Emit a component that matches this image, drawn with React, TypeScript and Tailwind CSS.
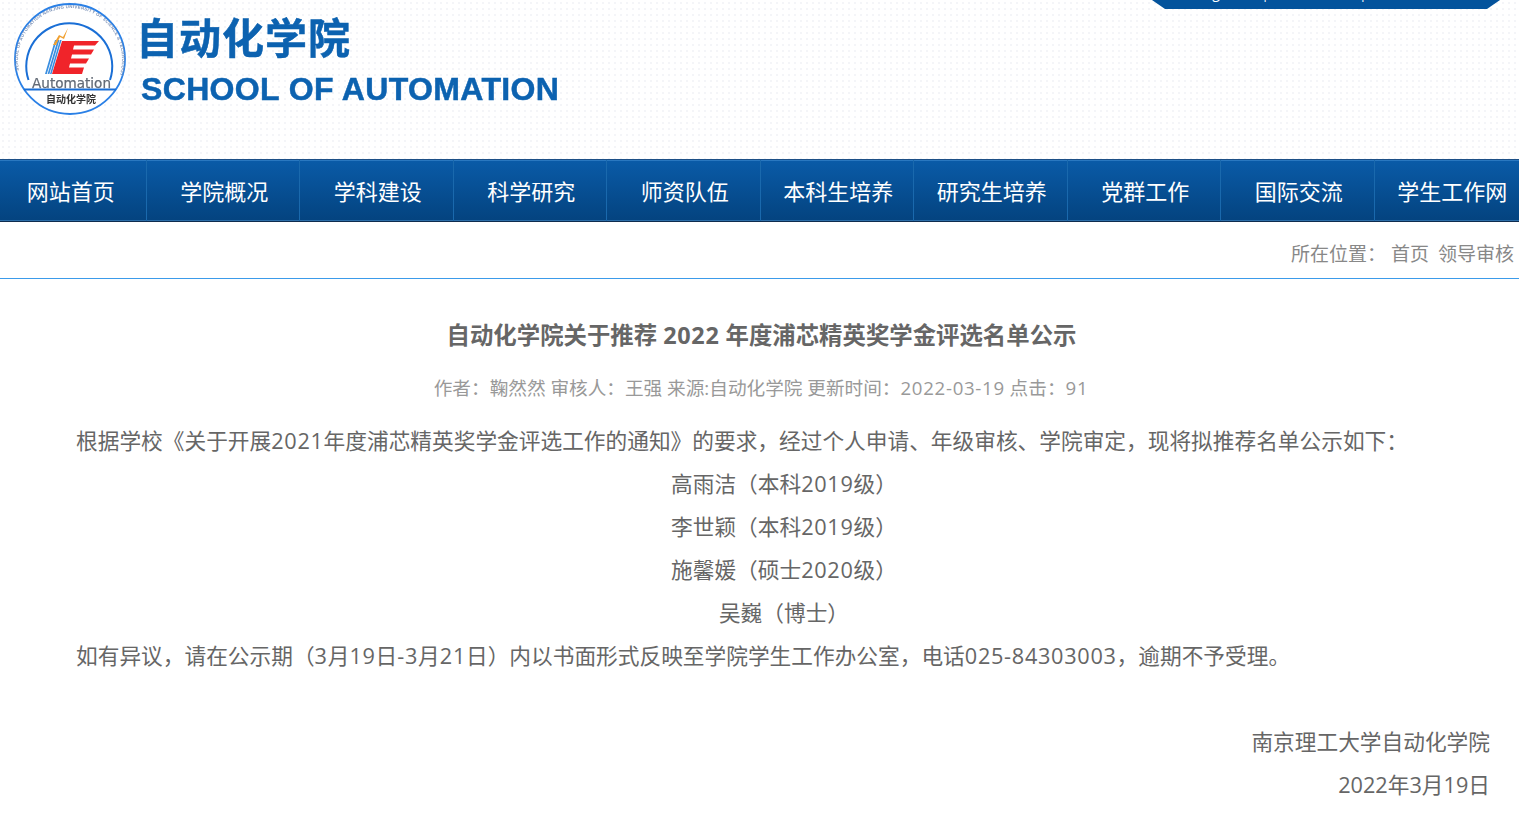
const navItems = [
  "网站首页",
  "学院概况",
  "学科建设",
  "科学研究",
  "师资队伍",
  "本科生培养",
  "研究生培养",
  "党群工作",
  "国际交流",
  "学生工作网",
];

// digits in the original font run a little wider
function Num({ children }: { children: string }) {
  return <span className="tracking-[0.7px]">{children}</span>;
}

function Logo() {
  return (
    <svg viewBox="0 0 114 114" className="h-[114px] w-[114px] shrink-0 blur-[0.5px]">
      <defs>
        <path id="logo-ring" d="M7.5 74 A 52 52 0 1 1 106.5 74" />
      </defs>
      <circle cx="57" cy="57" r="55" fill="#fff" stroke="#2a80e6" strokeWidth="1.8" />
      <text fontSize="4.4" fontWeight="700" fontFamily="'Liberation Sans', sans-serif" fill="#7d93b8" letterSpacing="0.3">
        <textPath href="#logo-ring" startOffset="3%">
          SCHOOL OF AUTOMATION NANJING UNIVERSITY OF SCIENCE &amp; TECHNOLOGY
        </textPath>
      </text>
      <path d="M15.5 78 A 43 43 0 1 1 97 78" fill="none" stroke="#1a6fd6" strokeWidth="2" />
      {/* red frame */}
      <path
        d="M49 39 H86 L82 43.5 H61 L60 47.5 H81 L78 52.5 H59 L58 56.5 H76 L73 61.5 H57 L56 65.5 H71 L69 72 H39 Z"
        fill="#f0242a"
      />
      {/* blue stripes */}
      <path
        d="M42 38 L32 72 H33.8 L43.8 38 Z M44.6 38 L34.6 72 H36.4 L46.4 38 Z M47 38 L37 72 H38.6 L48.6 38 Z"
        fill="#3a8ee0"
      />
      {/* spark */}
      <path d="M40 43 L46 33 L50 35 L55 26 L51 37 L47 35 L43 43 Z" fill="#f0a030" />
      <text x="19" y="85.5" fontSize="14.5" fontFamily="'DejaVu Sans', sans-serif" fill="#636b76" stroke="#636b76" strokeWidth="0.25" textLength="79" lengthAdjust="spacingAndGlyphs">
        Automation
      </text>
      <path d="M11 87.5 H103" stroke="#1a6fd6" strokeWidth="1.8" />
      <text x="58" y="101" fontSize="10" textAnchor="middle" fontWeight="700" fontFamily="'Noto Sans CJK SC', sans-serif" fill="#333">
        自动化学院
      </text>
    </svg>
  );
}

export default function App() {
  return (
    <div className="h-[828px] w-[1519px] overflow-hidden bg-white font-['Open_Sans','Noto_Sans_CJK_SC',sans-serif] text-[#666]">
      {/* Header */}
      <header className="relative flex h-[159px] items-start bg-[radial-gradient(#f4f5f8_1px,transparent_1px)] bg-[length:6px_6px] pl-[13px] pt-[2px]">
        <Logo />
        <div className="ml-[11px] flex flex-col font-['Liberation_Sans','Noto_Sans_CJK_SC',sans-serif] font-bold text-[#0c62b0] blur-[0.3px] [-webkit-text-stroke:0.5px_#0c62b0]">
          <span className="-ml-[2px] mt-[13px] text-[42px] leading-[50px] tracking-[1px]">自动化学院</span>
          <span className="ml-[3px] mt-[5px] text-[32px] leading-[38px] tracking-[0.35px]">SCHOOL OF AUTOMATION</span>
        </div>
        <div className="absolute right-[19px] top-0 flex h-[9px] w-[348px] overflow-hidden bg-[#03539c] pl-[44px] [clip-path:polygon(0_0,100%_0,calc(100%_-_13px)_100%,13px_100%)]">
          <span className="-mt-[17px] whitespace-nowrap text-[14px] leading-[20px] text-white">English</span>
          <span className="-mt-[17px] ml-[19px] text-[14px] leading-[20px] text-white">|</span>
          <span className="-mt-[17px] ml-[17px] whitespace-nowrap text-[14px] leading-[20px] text-white">学校主页</span>
          <span className="-mt-[17px] ml-[17px] text-[14px] leading-[20px] text-white">|</span>
          <span className="-mt-[17px] ml-[17px] whitespace-nowrap text-[14px] leading-[20px] text-white">联系我们</span>
        </div>
      </header>

      {/* Nav */}
      <nav className="h-[63px] overflow-hidden border-t border-b border-t-[#1c4f86] border-b-[#0e2c4f] bg-gradient-to-b from-[#0a5ba8] to-[#04437f] shadow-[inset_0_1px_0_#2a78c0,inset_0_-1px_0_#2c6da8]">
        <ul className="-ml-[7px] flex h-full w-[1535px]">
          {navItems.map((item) => (
            <li
              key={item}
              className="flex h-full w-[153.5px] items-center justify-center border-r border-[#1a69ad] pl-[3px] pt-[2px] text-[22px] text-white"
            >
              {item}
            </li>
          ))}
        </ul>
      </nav>

      {/* Breadcrumb */}
      <div className="flex h-[57px] items-center justify-end gap-[9px] border-b border-[#3b9bea] pr-[5px] pt-[8px] text-[19px] text-[#888]">
        <span className="-mr-[4px]">所在位置：</span>
        <span>首页</span>
        <span>领导审核</span>
      </div>

      {/* Article */}
      <main className="px-[76px]">
        <h1 className="-ml-[76px] mt-[38px] w-[1519px] pl-[4px] text-center text-[23.4px] font-bold leading-[36px] text-[#666]">
          自动化学院关于推荐 <Num>2022</Num> 年度浦芯精英奖学金评选名单公示
        </h1>
        <p className="mt-[20px] pl-[3px] text-center text-[18.65px] leading-[30px] text-[#999]">
          作者：鞠然然 审核人：王强 来源:自动化学院 更新时间：<Num>2022-03-19</Num> 点击：<Num>91</Num>
        </p>
        <div className="mt-[16px] text-[21.7px] leading-[43px]">
          <p>
            根据学校《关于开展<Num>2021</Num>年度浦芯精英奖学金评选工作的通知》的要求，经过个人申请、年级审核、学院审定，现将拟推荐名单公示如下：
          </p>
          <p className="pl-[49px] text-center">
            高雨洁（本科<Num>2019</Num>级）
          </p>
          <p className="pl-[49px] text-center">
            李世颖（本科<Num>2019</Num>级）
          </p>
          <p className="pl-[49px] text-center">
            施馨媛（硕士<Num>2020</Num>级）
          </p>
          <p className="pl-[49px] text-center">吴巍（博士）</p>
          <p>
            如有异议，请在公示期（<Num>3</Num>月<Num>19</Num>日<Num>-3</Num>月<Num>21</Num>日）内以书面形式反映至学院学生工作办公室，电话<Num>025-84303003</Num>，逾期不予受理。
          </p>
          <p className="-mr-[47px] mt-[43px] text-right">南京理工大学自动化学院</p>
          <p className="-mr-[47px] text-right">2022年3月19日</p>
        </div>
      </main>
    </div>
  );
}
